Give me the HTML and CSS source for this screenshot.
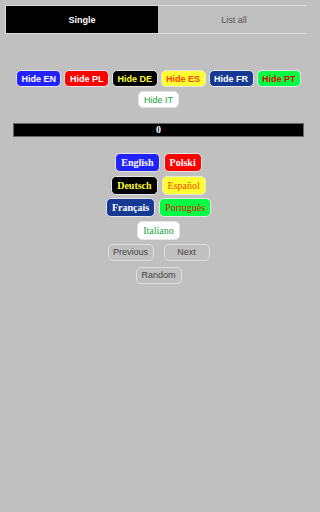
FILE: index.html
```html
<!DOCTYPE html>
<html>
<head>
<meta charset="utf-8">
<link rel="stylesheet" href="styles.css">
</head>
<body>
<div class="page">
  <div class="tabs">
    <div class="tab active">Single</div>
    <div class="tab">List all</div>
  </div>
  <div class="hide-row">
    <button class="hbtn en">Hide EN</button>
    <button class="hbtn pl">Hide PL</button>
    <button class="hbtn de">Hide DE</button>
    <button class="hbtn es">Hide ES</button>
    <button class="hbtn fr">Hide FR</button>
    <button class="hbtn pt">Hide PT</button>
    <button class="hbtn it">Hide IT</button>
  </div>
  <div class="counter">0</div>
  <div class="langs">
    <div class="lrow"><button class="lbtn en">English</button><button class="lbtn pl">Polski</button></div>
    <div class="lrow"><button class="lbtn de">Deutsch</button><button class="lbtn es">Español</button></div>
    <div class="lrow"><button class="lbtn fr">Français</button><button class="lbtn pt">Português</button></div>
    <div class="lrow"><button class="lbtn it">Italiano</button></div>
  </div>
  <div class="nav">
    <div class="lrow"><button class="nbtn">Previous</button><button class="nbtn">Next</button></div>
    <div class="lrow"><button class="nbtn">Random</button></div>
  </div>
</div>
</body>
</html>
```
FILE: styles.css
```css
html, body {
  margin: 0;
  padding: 0;
  background: #c0c0c0;
  overflow: hidden;
}
.page {
  width: 302px;
  margin-left: 5px;
  padding-top: 5px;
  font-family: "Liberation Sans", Arial, sans-serif;
}
.tabs {
  display: flex;
  border-top: 1px solid #dcdcdc;
  border-bottom: 1px solid #dcdcdc;
  border-left: 1px solid #dcdcdc;
  height: 27px;
}
.tab {
  flex: 0 0 152px;
  display: flex;
  align-items: center;
  justify-content: center;
  font-size: 9px;
  color: #555;
}
.tab + .tab {
  flex: 1;
  padding-left: 3px;
}
.tab.active {
  background: #000;
  color: #fff;
  font-weight: bold;
}
.hide-row {
  margin-top: 36px;
  display: flex;
  flex-wrap: wrap;
  justify-content: center;
  gap: 4px 3px;
  padding: 0 0 0 5px;
}
button {
  font: inherit;
  margin: 0;
  cursor: pointer;
}
.hbtn {
  font-family: "Liberation Sans", Arial, sans-serif;
  font-size: 9px;
  font-weight: bold;
  height: 17px;
  padding: 0 4.5px;
  border: 1px solid #e4e4e4;
  border-radius: 5px;
}
.en { background: #2222ff; color: #fff; }
.pl { background: #ff0000; color: #fff; }
.de { background: #000; color: #ffff33; }
.es { background: #ffff33; color: #ff4400; }
.fr { background: #163a94; color: #fff; }
.pt { background: #00ff44; color: #e00000; }
.it { background: #fff; color: #16a040; }
.hbtn.it { font-weight: normal; }
.counter {
  margin: 15px 3px 0 8px;
  height: 12px;
  background: #000;
  border: 1px solid #666;
  color: #fff;
  font-family: "Liberation Serif", "Times New Roman", serif;
  font-weight: bold;
  font-size: 10px;
  line-height: 12px;
  text-align: center;
}
.langs {
  margin-top: 16px;
  display: flex;
  flex-direction: column;
  gap: 3.5px;
  padding-left: 5px;
}
.lrow {
  display: flex;
  justify-content: center;
  gap: 4px;
}
.lbtn {
  font-family: "Liberation Serif", "Times New Roman", serif;
  font-size: 10px;
  height: 19px;
  padding: 0 5px;
  border: 1px solid #e4e4e4;
  border-radius: 5px;
}
.lbtn.en, .lbtn.pl, .lbtn.fr, .lbtn.de { font-weight: bold; }
.nav {
  margin-top: 4px;
  display: flex;
  flex-direction: column;
  gap: 6px;
  padding-left: 5px;
}
.nav .lrow { gap: 10px; }
.nbtn {
  font-family: "Liberation Sans", Arial, sans-serif;
  font-size: 9px;
  color: #444;
  background: transparent;
  height: 17px;
  width: 46px;
  padding: 0;
  border: 1px solid #e0e0e0;
  border-radius: 5px;
}
```
